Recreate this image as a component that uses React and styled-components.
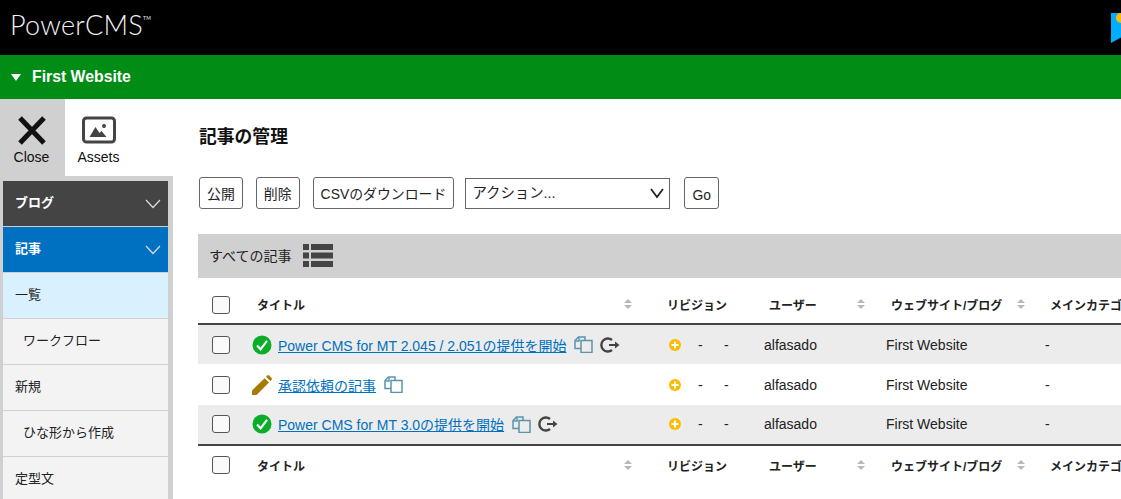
import React from "react";
import styled, { createGlobalStyle } from "styled-components";

const GlobalStyle = createGlobalStyle`
  html, body {
    margin: 0;
    padding: 0;
    height: 499px;
    overflow: hidden;
    background: #fff;
    color: #222;
    font-family: "Liberation Sans", "Noto Sans CJK JP", sans-serif;
    font-size: 14px;
  }
`;

const Page = styled.div`
  width: 1121px;
  height: 499px;
  overflow: hidden;
  display: flex;
  flex-direction: column;
`;

const TopBar = styled.header`
  flex: 0 0 55px;
  background: #000;
  display: flex;
  align-items: center;
  justify-content: space-between;
  padding-left: 10px;
`;

const Logo = styled.div`
  align-self: flex-start;
  color: #f2f2f2;
  font-family: "Lato", "Liberation Sans", sans-serif;
  font-weight: 300;
  font-size: 27px;
  letter-spacing: 0.25px;
  line-height: 50px;
  height: 50px;
  sup {
    font-size: 5px;
    font-weight: 400;
    line-height: 0;
    vertical-align: 15px;
  }
`;

const SiteBar = styled.div`
  flex: 0 0 44px;
  background: #008c15;
  color: #fff;
  display: flex;
  align-items: center;
  padding-left: 11px;
  gap: 11px;
  font-size: 15.8px;
  font-weight: bold;
`;

const Triangle = styled.span`
  width: 0;
  height: 0;
  border-left: 5px solid transparent;
  border-right: 5px solid transparent;
  border-top: 7px solid #fff;
`;

const Body = styled.div`
  flex: 1;
  display: flex;
  min-height: 0;
`;

const Side = styled.aside`
  flex: 0 0 173px;
  display: flex;
  flex-direction: column;
`;

const Tabs = styled.div`
  flex: 0 0 77px;
  display: flex;
`;

const Tab = styled.div`
  width: ${(p) => (p.$active ? "65px" : "67px")};
  background: ${(p) => (p.$active ? "#d0d0d0" : "#fff")};
  color: #111;
  display: flex;
  flex-direction: column;
  align-items: center;
  padding: 17px ${(p) => (p.$active ? "2px" : "0")} 0 0;
  box-sizing: border-box;
  gap: 4px;
  font-size: 14px;
  line-height: 16px;
`;

const TabIcon = styled.svg`
  width: 34px;
  height: 30px;
  margin-bottom: -1px;
`;

const Menu = styled.nav`
  flex: 1;
  background: #d0d0d0;
  padding: 5px 5px 0 3px;
  overflow: hidden;
`;

const MenuHead = styled.div`
  height: 45px;
  box-sizing: border-box;
  margin-bottom: 1px;
  background: ${(p) => p.$bg};
  color: #fff;
  font-size: 13px;
  font-weight: bold;
  display: flex;
  align-items: center;
  justify-content: space-between;
  padding: 0 7px 4px 12px;
  svg {
    margin-top: 4px;
  }
`;

const MenuItem = styled.div`
  height: 45px;
  box-sizing: border-box;
  margin-bottom: 1px;
  background: ${(p) => (p.$current ? "#d9f0ff" : "#f3f3f3")};
  color: #222;
  font-size: 13px;
  display: flex;
  align-items: center;
  padding: 0 0 4px ${(p) => (p.$sub ? "20px" : "12px")};
`;

const Main = styled.main`
  flex: 1;
  min-width: 0;
  padding-left: 25px;
  overflow: hidden;
`;

const Title = styled.h1`
  margin: 0;
  padding: 26px 0 0 1px;
  height: 78px;
  box-sizing: border-box;
  font-size: 17.8px;
  line-height: 24px;
  font-weight: bold;
  color: #111;
`;

const Actions = styled.div`
  display: flex;
  align-items: flex-start;
  height: 32px;
  padding-left: 1px;
`;

const Button = styled.button`
  height: 32px;
  box-sizing: border-box;
  margin-right: ${(p) => p.$gap}px;
  padding: ${(p) => (p.$latin ? "3px 7px 0" : "0 7px 1px")};
  background: #fff;
  border: 1px solid #666;
  border-radius: 3px;
  font-family: inherit;
  font-size: 13.9px;
  color: #222;
`;

const SelectBox = styled.div`
  position: relative;
  width: 205px;
  height: 31px;
  margin: 1px 14px 0 0;
`;

const Select = styled.select`
  width: 100%;
  height: 100%;
  box-sizing: border-box;
  appearance: none;
  padding: 0 6px 1px;
  background: #fff;
  border: 1px solid #666;
  border-radius: 0;
  font-family: inherit;
  font-size: 14.4px;
  color: #222;
`;

const SelectArrow = styled.svg`
  position: absolute;
  top: 9px;
  right: 6px;
  width: 14px;
  height: 12px;
`;

const FilterBar = styled.div`
  height: 44px;
  box-sizing: border-box;
  margin-top: 25px;
  background: #d0d0d0;
  display: flex;
  align-items: center;
  padding: 0 0 1px 11px;
  gap: 12px;
  font-size: 14px;
  color: #222;
`;

const FilterLabel = styled.span`
  padding-bottom: 2px;
`;

const Table = styled.table`
  margin-top: 7px;
  width: 1030px;
  table-layout: fixed;
  border-collapse: collapse;
  col:nth-child(1) { width: 49px; }
  col:nth-child(2) { width: 410px; }
  col:nth-child(3) { width: 102px; }
  col:nth-child(4) { width: 122px; }
  col:nth-child(5) { width: 159px; }
`;

const HeadRow = styled.tr`
  height: 39px;
  border-bottom: ${(p) => (p.$top ? "2px solid #444" : "0")};
  border-top: ${(p) => (p.$top ? "0" : "2px solid #444")};
`;

const Th = styled.th`
  padding: 0 ${(p) => p.$right ?? 16}px 0 10px;
  text-align: left;
  font-size: 12px;
  font-weight: bold;
  color: #222;
  white-space: nowrap;
  overflow: hidden;
`;

const ThInner = styled.div`
  display: flex;
  align-items: center;
  justify-content: space-between;
`;

const Row = styled.tr`
  height: 40.4px;
  background: ${(p) => (p.$odd ? "#ececec" : "#fff")};
`;

const Td = styled.td`
  padding: 0 0 0 5px;
  font-size: 14px;
  color: #222;
  white-space: nowrap;
`;

const CheckCell = styled.div`
  display: flex;
  padding: ${(p) => (p.$head ? "2px" : "0")} 0 0 9px;
`;

const Check = styled.input.attrs({ type: "checkbox" })`
  appearance: none;
  margin: 0;
  width: 18px;
  height: 18px;
  box-sizing: border-box;
  background: #fafafa;
  border: 1px solid #555;
  border-radius: 3px;
`;

const TitleCell = styled.div`
  display: flex;
  align-items: center;
`;

const StatusSlot = styled.span`
  display: inline-flex;
  width: 26px;
`;

const EntryLink = styled.a`
  color: #0070c0;
  text-decoration: underline;
  font-size: 14px;
  margin-right: 8px;
`;

const RedoWrap = styled.span`
  display: inline-flex;
  margin-left: 6px;
`;

const RevCell = styled.div`
  display: flex;
  align-items: center;
  padding-left: 7px;
  span {
    width: 26px;
  }
  svg {
    margin-right: 17px;
  }
`;

function SortIcon() {
  return (
    <svg width="8" height="10" viewBox="0 0 8 10">
      <path d="M4 0l4 4H0zM4 10L0 6h8z" fill="#b8b8b8" />
    </svg>
  );
}

function Chevron() {
  return (
    <svg width="16" height="10" viewBox="0 0 16 10" fill="none">
      <path d="M1 1l7 7.5L15 1" stroke="#ddd" strokeWidth="1.2" />
    </svg>
  );
}

function CheckIcon() {
  return (
    <svg width="20" height="20" viewBox="0 0 20 20">
      <circle cx="10" cy="10" r="9.5" fill="#09ad27" />
      <path d="M5 10.5l3.6 3.8L15 5.8" fill="none" stroke="#fff" strokeWidth="2.2" />
    </svg>
  );
}

function PencilIcon() {
  return (
    <svg width="20" height="20" viewBox="0 0 20 20">
      <path d="M0 20v-4.6L12.6 3.2l4.4 4.4L4.6 20z" fill="#a67c00" />
      <path d="M14 1.8l1.2-1.2c.6-.5 1.4-.5 2 0l2.3 2.3c.5.6.5 1.4 0 2L18.3 6.1z" fill="#a67c00" />
    </svg>
  );
}

function CopyIcon() {
  return (
    <svg width="19" height="17" viewBox="0 0 19 17" fill="none" stroke="#5b93ad" strokeWidth="1.5">
      <path d="M7 12.5H1V4.500L4.500 1H11v3.500" />
      <path d="M1.500 5h3.500V1.500" />
      <path d="M7 4.500h11v12H7z" />
    </svg>
  );
}

function RedoIcon() {
  return (
    <svg width="21" height="16" viewBox="0 0 21 16" fill="none">
      <path d="M13 3A6.500 6.500 0 1 0 13 13" stroke="#444" strokeWidth="2.400" />
      <path d="M10 8h7" stroke="#444" strokeWidth="2" />
      <path d="M16 4.500L20.500 8 16 11.500z" fill="#444" />
    </svg>
  );
}

function PlusIcon() {
  return (
    <svg width="12" height="12" viewBox="0 0 12 12">
      <circle cx="6" cy="6" r="6" fill="#fcbc06" />
      <path d="M6 2.500v7M2.500 6h7" stroke="#fff" strokeWidth="1.800" />
    </svg>
  );
}

function ListIcon() {
  return (
    <svg width="30" height="23" viewBox="0 0 30 23" fill="#444">
      <path d="M0 0h6v6H0zM8 0h22v6H8zM0 8.500h6v6H0zM8 8.500h22v6H8zM0 17h6v6H0zM8 17h22v6H8z" />
    </svg>
  );
}

const rows = [
  { title: "Power CMS for MT 2.045 / 2.051の提供を開始", published: true },
  { title: "承認依頼の記事", published: false },
  { title: "Power CMS for MT 3.0の提供を開始", published: true },
];

function TableHead({ top }) {
  return (
    <HeadRow $top={top}>
      <Td>
        <CheckCell $head={top}>
          <Check />
        </CheckCell>
      </Td>
      <Th $right={25}>
        <ThInner>
          タイトル
          <SortIcon />
        </ThInner>
      </Th>
      <Th>リビジョン</Th>
      <Th>
        <ThInner>
          ユーザー
          <SortIcon />
        </ThInner>
      </Th>
      <Th $right={15}>
        <ThInner>
          ウェブサイト/ブログ
          <SortIcon />
        </ThInner>
      </Th>
      <Th>メインカテゴリ</Th>
    </HeadRow>
  );
}

export default function App() {
  return (
    <Page>
      <GlobalStyle />
      <TopBar>
        <Logo>
          PowerCMS<sup>TM</sup>
        </Logo>
        <svg width="10" height="30" viewBox="0 0 10 30">
          <path d="M0 0h10v24.500L0 30z" fill="#00aeff" />
          <circle cx="10" cy="5" r="5" fill="#fcbc06" />
        </svg>
      </TopBar>
      <SiteBar>
        <Triangle />
        First Website
      </SiteBar>
      <Body>
        <Side>
          <Tabs>
            <Tab $active>
              <TabIcon viewBox="0 0 34 30">
                <path d="M5 2l24 25M29 2L5 27" stroke="#111" strokeWidth="5" fill="none" />
              </TabIcon>
              Close
            </Tab>
            <Tab>
              <TabIcon viewBox="0 0 34 30">
                <rect x="1.500" y="2" width="31" height="24" rx="3" fill="none" stroke="#444" strokeWidth="3" />
                <path d="M7.500 21l6-10 4 6 2-2 5 6z" fill="#444" />
                <circle cx="22" cy="10" r="2" fill="#444" />
              </TabIcon>
              Assets
            </Tab>
          </Tabs>
          <Menu>
            <MenuHead $bg="#444">
              ブログ
              <Chevron />
            </MenuHead>
            <MenuHead $bg="#0070c0">
              記事
              <Chevron />
            </MenuHead>
            <MenuItem $current>一覧</MenuItem>
            <MenuItem $sub>ワークフロー</MenuItem>
            <MenuItem>新規</MenuItem>
            <MenuItem $sub>ひな形から作成</MenuItem>
            <MenuItem>定型文</MenuItem>
          </Menu>
        </Side>
        <Main>
          <Title>記事の管理</Title>
          <Actions>
            <Button $gap={13}>公開</Button>
            <Button $gap={13}>削除</Button>
            <Button $gap={11}>CSVのダウンロード</Button>
            <SelectBox>
              <Select defaultValue="">
                <option value="">アクション...</option>
              </Select>
              <SelectArrow viewBox="0 0 14 12" fill="none">
                <path d="M1 2l6 8 6-8" stroke="#222" strokeWidth="1.800" />
              </SelectArrow>
            </SelectBox>
            <Button $gap={0} $latin>
              Go
            </Button>
          </Actions>
          <FilterBar>
            <FilterLabel>すべての記事</FilterLabel>
            <ListIcon />
          </FilterBar>
          <Table>
            <colgroup>
              <col />
              <col />
              <col />
              <col />
              <col />
              <col />
            </colgroup>
            <tbody>
              <TableHead top />
              {rows.map((row, i) => (
                <Row key={row.title} $odd={i !== 1}>
                  <Td>
                    <CheckCell>
                      <Check />
                    </CheckCell>
                  </Td>
                  <Td>
                    <TitleCell>
                      <StatusSlot>{row.published ? <CheckIcon /> : <PencilIcon />}</StatusSlot>
                      <EntryLink href="#">{row.title}</EntryLink>
                      <CopyIcon />
                      {row.published && (
                        <RedoWrap>
                          <RedoIcon />
                        </RedoWrap>
                      )}
                    </TitleCell>
                  </Td>
                  <Td>
                    <RevCell>
                      <PlusIcon />
                      <span>-</span>
                      <span>-</span>
                    </RevCell>
                  </Td>
                  <Td>alfasado</Td>
                  <Td>First Website</Td>
                  <Td>-</Td>
                </Row>
              ))}
              <TableHead />
            </tbody>
          </Table>
        </Main>
      </Body>
    </Page>
  );
}
